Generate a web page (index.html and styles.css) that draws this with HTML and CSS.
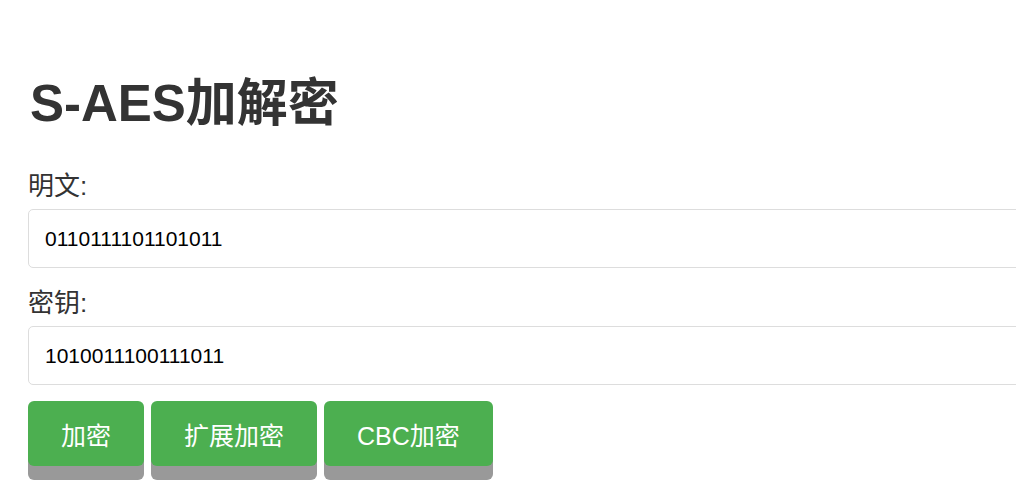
FILE: index.html
```html
<!DOCTYPE html>
<html lang="zh-CN">
<head>
<meta charset="utf-8">
<title>S-AES加解密</title>
<link rel="stylesheet" href="styles.css">
</head>
<body>
<div class="container">
  <h1 class="title">S-AES加解密</h1>
  <div class="field">
    <label class="label" for="plain">明文:</label>
    <input class="input" id="plain" type="text" value="0110111101101011">
  </div>
  <div class="field">
    <label class="label" for="key">密钥:</label>
    <input class="input" id="key" type="text" value="1010011100111011">
  </div>
  <div class="actions">
    <button class="btn">加密</button>
    <button class="btn">扩展加密</button>
    <button class="btn">CBC加密</button>
  </div>
</div>
</body>
</html>
```

FILE: styles.css
```css
html {
  overflow: hidden;
}
html, body {
  margin: 0;
  padding: 0;
  background: #fff;
}
body {
  font-family: "Liberation Sans", Arial, "Noto Sans CJK SC", sans-serif;
  color: #333;
}
.container {
  width: 1100px;
  padding: 74px 0 40px 28px;
  box-sizing: border-box;
}
.title {
  margin: 0 0 0 2px;
  font-size: 51px;
  line-height: 60px;
  font-weight: bold;
  color: #333;
}
.field {
  display: flex;
  flex-direction: column;
}
.label {
  display: block;
  font-size: 26px;
  line-height: 30px;
  margin-top: 37px;
  margin-bottom: 8px;
  color: #333;
}
.field + .field .label {
  margin-top: 20px;
}
.input {
  width: 1060px;
  height: 59px;
  box-sizing: border-box;
  border: 1px solid #ddd;
  border-radius: 5px;
  padding: 0 16px;
  font-family: "Liberation Sans", Arial, sans-serif;
  font-size: 21px;
  color: #000;
  background: #fff;
  outline: none;
}
.actions {
  display: flex;
  gap: 7px;
  margin-top: 16px;
}
.btn {
  height: 65px;
  padding: 0 33px;
  border: none;
  border-radius: 6px;
  background: #4caf50;
  color: #fff;
  font-family: "Liberation Sans", Arial, "Noto Sans CJK SC", sans-serif;
  font-size: 25px;
  box-shadow: 0 14px 0 #999;
  cursor: pointer;
}
```
